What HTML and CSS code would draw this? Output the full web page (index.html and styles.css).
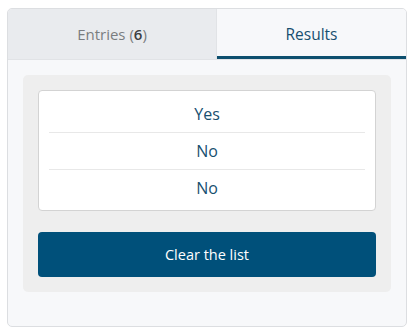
FILE: index.html
```html
<!DOCTYPE html>
<html lang="en">

<head>
    <meta charset="UTF-8">
    <meta name="viewport" content="width=device-width, initial-scale=1.0">
    <title>Results</title>
    <link rel="stylesheet" href="styles.css">
</head>

<body>
    <div class="card">
        <div class="tabs">
            <div class="tab">Entries (<b>6</b>)</div>
            <div class="tab active-tab">Results</div>
        </div>
        <div class="content">
            <div class="panel">
                <ul class="result-list">
                    <li>Yes</li>
                    <li>No</li>
                    <li>No</li>
                </ul>
                <button class="clear-btn">Clear the list</button>
            </div>
        </div>
    </div>
</body>

</html>
```

FILE: styles.css
```css
html,
body {
    margin: 0;
    padding: 0;
}

body {
    background-color: #fff;
    font-family: "Open Sans", "Noto Sans", sans-serif;
}

.card {
    width: 398px;
    margin: 8px 0 0 7px;
    border: 1px solid #dcdee1;
    border-radius: 5px;
    background-color: #f7f8fa;
    overflow: hidden;
}

.tabs {
    display: flex;
    height: 50px;
    border-bottom: 1px solid #e1e3e6;
}

.tab {
    flex: 1;
    display: flex;
    justify-content: center;
    align-items: center;
    font-size: 15px;
    color: #7a7d80;
    background-color: #e9ebee;
    border-right: 1px solid #e1e3e6;
}

.tab:first-child {
    flex: 0 0 208px;
}

.tab b {
    color: #3b3e42;
    font-weight: 600;
}

.tab.active-tab {
    font-size: 15.5px;
    color: #174f6f;
    background-color: #f7f8fa;
    border-right: none;
    box-shadow: inset 0 -3px 0 #0d4f6e;
}

.content {
    padding: 15px 15px 34px;
}

.panel {
    display: flex;
    flex-direction: column;
    gap: 21px;
    padding: 15px;
    background-color: #eeeeee;
    border-radius: 5px;
}

.result-list {
    list-style: none;
    margin: 0;
    padding: 4px 10px;
    background-color: #fff;
    border: 1px solid #d3d3d3;
    border-radius: 4px;
}

.result-list li {
    box-sizing: border-box;
    height: 37px;
    display: flex;
    justify-content: center;
    align-items: center;
    font-size: 16px;
    color: #174f6f;
}

.result-list li+li {
    border-top: 1px solid #e8e8e8;
}

.clear-btn {
    height: 45px;
    border: none;
    border-radius: 4px;
    background-color: #00507a;
    color: #fff;
    font-family: inherit;
    font-size: 14.5px;
    cursor: pointer;
}
```
